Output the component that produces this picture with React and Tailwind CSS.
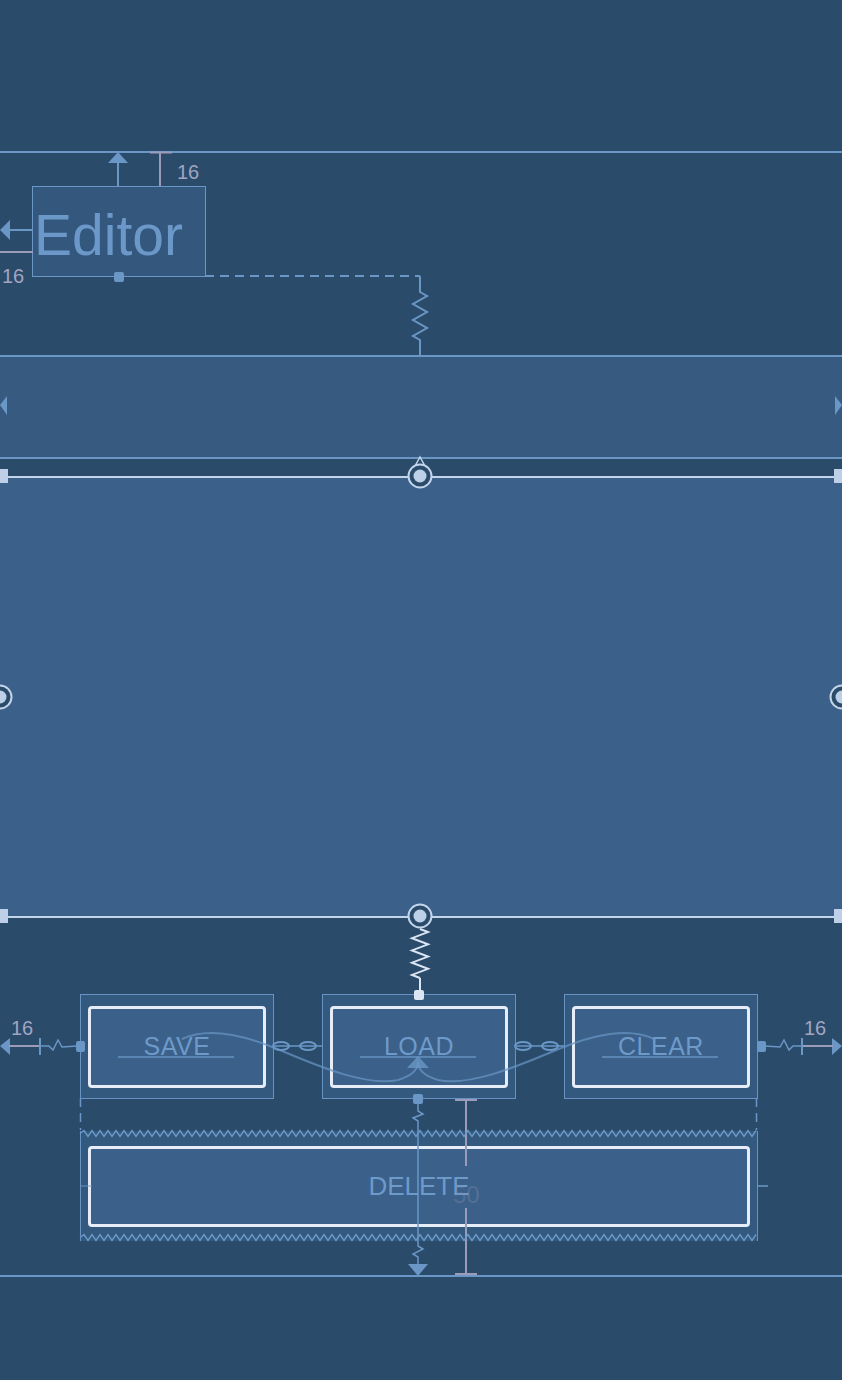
const LINE = "#6a97c6";
const DIM = "#9c9cba";
const LIGHT = "#c3d5ea";

const zigH = (x0, x1, y, amp, step) => {
  let d = `M ${x0} ${y}`;
  let up = true;
  for (let x = x0 + step / 2; x <= x1; x += step / 2) {
    d += ` L ${x} ${up ? y - amp : y + amp}`;
    up = !up;
  }
  return d;
};

const spring = (x, y0, y1, amp, n) => {
  const seg = (y1 - y0) / (n * 2);
  let d = `M ${x} ${y0}`;
  for (let i = 0; i < n * 2; i++) {
    const y = y0 + seg * (i + 0.5);
    d += ` L ${i % 2 === 0 ? x + amp : x - amp} ${y}`;
  }
  d += ` L ${x} ${y1}`;
  return d;
};

const Handle = ({ cx, cy }) => (
  <g>
    <circle cx={cx} cy={cy} r="11.5" fill="#2b4b6b" stroke={LIGHT} strokeWidth="2" />
    <circle cx={cx} cy={cy} r="6.5" fill="#bdd0e7" />
  </g>
);

const Overlay = () => (
  <svg
    className="absolute inset-0 pointer-events-none"
    width="842"
    height="1380"
    viewBox="0 0 842 1380"
    fill="none"
  >
    {/* editor constraints */}
    <line x1="118" y1="186" x2="118" y2="161" stroke={LINE} strokeWidth="2" />
    <polygon points="108,163 128,163 118,152" fill={LINE} />
    <line x1="160" y1="152" x2="160" y2="186" stroke={DIM} strokeWidth="2" />
    <line x1="150" y1="152.5" x2="172" y2="152.5" stroke={DIM} strokeWidth="2" />
    <line x1="9" y1="230" x2="33" y2="230" stroke={LINE} strokeWidth="2" />
    <polygon points="0,230 10,220 10,240" fill={LINE} />
    <line x1="0" y1="252" x2="33" y2="252" stroke={DIM} strokeWidth="2" />
    <rect x="114" y="272" width="10" height="10" rx="2" fill={LINE} />
    <path d="M 205 276 L 420 276" stroke={LINE} strokeWidth="2" strokeDasharray="9 6" />
    <path d={`M 420 276 L 420 292 ${spring(420, 292, 340, 7, 3).slice(1)} L 420 356`} stroke={LINE} strokeWidth="2" />

    {/* band arrows */}
    <polygon points="0,405 7,396 7,415" fill={LINE} />
    <polygon points="842,405 835,396 835,415" fill={LINE} />

    {/* big area handles */}
    <path d="M 415 466 L 420 457 L 425 466" stroke={LIGHT} strokeWidth="1.5" />
    <rect x="-5" y="469" width="13" height="14" fill="#bdd0e7" />
    <rect x="834" y="469" width="13" height="14" fill="#bdd0e7" />
    <rect x="-5" y="909" width="13" height="14" fill="#bdd0e7" />
    <rect x="834" y="909" width="13" height="14" fill="#bdd0e7" />
    <Handle cx={420} cy={476} />
    <Handle cx={0} cy={697} />
    <Handle cx={842} cy={697} />
    <path d={spring(420, 929, 978, 8, 4)} stroke="#dbe6f4" strokeWidth="2" />
    <line x1="420" y1="978" x2="420" y2="994" stroke="#dbe6f4" strokeWidth="2" />
    <Handle cx={420} cy={916} />
    <rect x="414" y="990" width="10" height="10" rx="2" fill="#dbe6f4" />

    {/* left / right margins */}
    <polygon points="0,1046 10,1038 10,1055" fill={LINE} />
    <line x1="9" y1="1046" x2="40" y2="1046" stroke={DIM} strokeWidth="2" />
    <line x1="40" y1="1038" x2="40" y2="1055" stroke={LINE} strokeWidth="2" />
    <path d="M 40 1046 L 49 1046 L 53 1050 L 58 1040 L 62 1047 L 77 1046" stroke={LINE} strokeWidth="1.5" />
    <rect x="76" y="1041" width="9" height="11" rx="2" fill={LINE} />
    <polygon points="842,1046 832,1038 832,1055" fill={LINE} />
    <line x1="833" y1="1046" x2="802" y2="1046" stroke={DIM} strokeWidth="2" />
    <line x1="802" y1="1038" x2="802" y2="1055" stroke={LINE} strokeWidth="2" />
    <path d="M 802 1046 L 793 1046 L 789 1050 L 784 1040 L 780 1047 L 765 1046" stroke={LINE} strokeWidth="1.5" />
    <rect x="757" y="1041" width="9" height="11" rx="2" fill={LINE} />

    {/* chains */}
    {[281, 308, 523, 550].map((cx) => (
      <ellipse key={cx} cx={cx} cy="1046" rx="8" ry="4" stroke={LINE} strokeWidth="2" />
    ))}
    <line x1="273" y1="1046" x2="322" y2="1046" stroke={LINE} strokeWidth="1.5" />
    <line x1="515" y1="1046" x2="564" y2="1046" stroke={LINE} strokeWidth="1.5" />
    <g opacity="0.7" stroke={LINE} strokeWidth="2">
      <path d="M 182 1039 C 205 1028 235 1033 267 1045 S 360 1088 398 1080 Q 418 1074 418 1062" />
      <path d="M 654 1039 C 631 1028 601 1033 569 1045 S 476 1088 438 1080 Q 418 1074 418 1062" />
    </g>
    <polygon points="407,1068 429,1068 418,1056" fill={LINE} opacity="0.8" />

    {/* baselines */}
    <g stroke={LINE} strokeWidth="1.5" opacity="0.9">
      <line x1="118" y1="1057" x2="234" y2="1057" />
      <line x1="360" y1="1057" x2="476" y2="1057" />
      <line x1="602" y1="1057" x2="718" y2="1057" />
    </g>

    {/* load bottom + delete */}
    <rect x="413" y="1094" width="10" height="10" rx="2" fill={LINE} />
    <path d="M 418 1104 L 418 1111 L 423 1114 L 413 1118 L 418 1121 L 418 1246 L 423 1249 L 413 1254 L 418 1257 L 418 1264" stroke={LINE} strokeWidth="1.5" />
    <polygon points="408,1264 428,1264 418,1276" fill={LINE} />
    <g stroke={DIM} strokeWidth="2">
      <line x1="466" y1="1100" x2="466" y2="1166" />
      <line x1="466" y1="1208" x2="466" y2="1274" />
      <line x1="455" y1="1100" x2="477" y2="1100" />
      <line x1="455" y1="1274" x2="477" y2="1274" />
    </g>
    <path d="M 80.5 1098 L 80.5 1130" stroke={LINE} strokeWidth="1.5" strokeDasharray="9 6" />
    <path d="M 756.5 1098 L 756.5 1130" stroke={LINE} strokeWidth="1.5" strokeDasharray="9 6" />
    <path d={zigH(80, 757, 1133.5, 3, 8)} stroke={LINE} strokeWidth="1.5" />
    <path d={zigH(80, 757, 1237.5, 3, 8)} stroke={LINE} strokeWidth="1.5" />
    <line x1="80" y1="1186" x2="92" y2="1186" stroke={LINE} strokeWidth="1.5" opacity="0.6" />
    <line x1="757" y1="1186" x2="768" y2="1186" stroke={LINE} strokeWidth="1.5" />
  </svg>
);

const Button = ({ label }) => (
  <div className="w-[194px] h-[105px] border border-[#6792c2] bg-[#34597f] flex items-center justify-center">
    <div className="w-[178px] h-[82px] rounded-[4px] border-[3px] border-[#e6edf8] bg-[#3b6089] flex items-center justify-center">
      <span className="text-[25px] leading-none text-[#6e9aca] tracking-[0.5px]">{label}</span>
    </div>
  </div>
);

export default function App() {
  return (
    <div className="relative w-[842px] h-[1380px] overflow-hidden bg-[#2b4b6b] font-['Liberation_Sans',Arial,sans-serif]">
      <div className="h-[151px]" />
      <section className="relative h-[204px] border-t-2 border-[#6a97c6] pl-[32px] pt-[33px]">
        <div className="w-[174px] h-[91px] border border-[#6a97c6] bg-[#34587d] pl-[1px] pt-[20px]">
          <span className="block text-[57px] leading-none text-[#6b98c8]">Editor</span>
        </div>
        <span className="absolute left-[177px] top-[9px] text-[20px] leading-none text-[#a1a5c2]">16</span>
        <span className="absolute left-[2px] top-[113px] text-[20px] leading-none text-[#a1a5c2]">16</span>
      </section>
      <section className="h-[104px] border-y-2 border-[#6a97c6] bg-[#365a80]" />
      <div className="h-[17px]" />
      <section className="h-[442px] border-y-2 border-[#c3d5ea] bg-[#3b6089]" />
      <section className="relative h-[359px] border-b-2 border-[#6a97c6] pt-[76px] pl-[80px]">
        <span className="absolute left-[11px] top-[100px] text-[20px] leading-none text-[#a1a5c2]">16</span>
        <span className="absolute left-[804px] top-[100px] text-[20px] leading-none text-[#a1a5c2]">16</span>
        <div className="flex gap-[48px]">
          <Button label="SAVE" />
          <Button label="LOAD" />
          <Button label="CLEAR" />
        </div>
        <div className="mt-[32px] w-[678px] h-[110px] border-x border-[#6792c2] bg-[#34597f] flex items-center justify-center">
          <div className="relative w-[662px] h-[81px] rounded-[4px] border-[3px] border-[#e6edf8] bg-[#3b6089] flex items-center justify-center">
            <span className="text-[26px] leading-none text-[#6e9aca]">DELETE</span>
            <span className="absolute left-[362px] top-[34px] text-[24px] leading-none text-[#8e93b4] opacity-30">50</span>
          </div>
        </div>
      </section>
      <Overlay />
    </div>
  );
}
